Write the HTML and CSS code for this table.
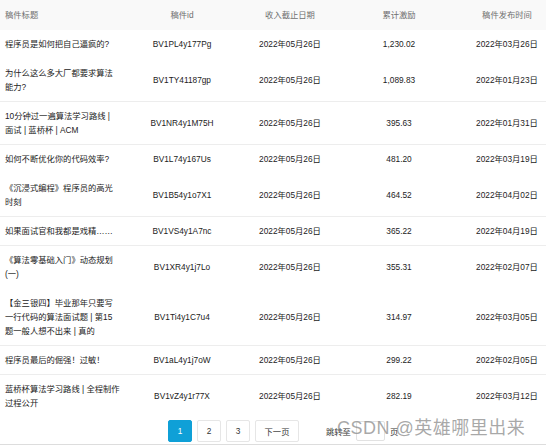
FILE: index.html
```html
<!DOCTYPE html>
<html lang="zh-CN">
<head>
<meta charset="utf-8">
<title>稿件收入</title>
<link rel="stylesheet" href="styles.css">
</head>
<body>
<div class="page">
  <div class="table-wrap">
    <table class="data-table">
      <colgroup>
        <col class="c-title">
        <col class="c-id">
        <col class="c-date">
        <col class="c-num">
        <col class="c-pub">
      </colgroup>
      <thead>
        <tr>
          <th class="left">稿件标题</th>
          <th>稿件id</th>
          <th>收入截止日期</th>
          <th>累计激励</th>
          <th>稿件发布时间</th>
        </tr>
      </thead>
      <tbody>
        <tr class="faint">
          <td class="left">程序员是如何把自己逼疯的?</td>
          <td>BV1PL4y177Pg</td>
          <td>2022年05月26日</td>
          <td>1,230.02</td>
          <td>2022年03月26日</td>
        </tr>
        <tr>
          <td class="left">为什么这么多大厂都要求算法能力?</td>
          <td>BV1TY41187gp</td>
          <td>2022年05月26日</td>
          <td>1,089.83</td>
          <td>2022年01月23日</td>
        </tr>
        <tr>
          <td class="left">10分钟过一遍算法学习路线 | 面试 | 蓝桥杯 | ACM</td>
          <td>BV1NR4y1M75H</td>
          <td>2022年05月26日</td>
          <td>395.63</td>
          <td>2022年01月31日</td>
        </tr>
        <tr class="faint">
          <td class="left">如何不断优化你的代码效率?</td>
          <td>BV1L74y167Us</td>
          <td>2022年05月26日</td>
          <td>481.20</td>
          <td>2022年03月19日</td>
        </tr>
        <tr>
          <td class="left">《沉浸式编程》程序员的高光时刻</td>
          <td>BV1B54y1o7X1</td>
          <td>2022年05月26日</td>
          <td>464.52</td>
          <td>2022年04月02日</td>
        </tr>
        <tr>
          <td class="left">如果面试官和我都是戏精……</td>
          <td>BV1VS4y1A7nc</td>
          <td>2022年05月26日</td>
          <td>365.22</td>
          <td>2022年04月19日</td>
        </tr>
        <tr class="faint">
          <td class="left">《算法零基础入门》动态规划(一)</td>
          <td>BV1XR4y1j7Lo</td>
          <td>2022年05月26日</td>
          <td>355.31</td>
          <td>2022年02月07日</td>
        </tr>
        <tr>
          <td class="left">【金三银四】毕业那年只要写一行代码的算法面试题 | 第15<wbr>题一般人想不出来 | 真的</td>
          <td>BV1Ti4y1C7u4</td>
          <td>2022年05月26日</td>
          <td>314.97</td>
          <td>2022年03月05日</td>
        </tr>
        <tr>
          <td class="left">程序员最后的倔强！过敏！</td>
          <td>BV1aL4y1j7oW</td>
          <td>2022年05月26日</td>
          <td>299.22</td>
          <td>2022年02月05日</td>
        </tr>
        <tr class="faint">
          <td class="left">蓝桥杯算法学习路线 | 全程制作过程公开</td>
          <td>BV1vZ4y1r77X</td>
          <td>2022年05月26日</td>
          <td>282.19</td>
          <td>2022年03月12日</td>
        </tr>
      </tbody>
    </table>
  </div>
  <div class="pager">
    <span class="pg-btn active">1</span>
    <span class="pg-btn">2</span>
    <span class="pg-btn">3</span>
    <span class="pg-btn next">下一页</span>
    <span class="jump">跳转至</span>
    <span class="jump-input"></span>
    <span class="jump-unit">页</span>
  </div>
  <div class="bottom-rule"></div>
  <div class="watermark">CSDN @英雄哪里出来</div>
</div>
</body>
</html>
```
FILE: styles.css
```css
html, body {
  margin: 0;
  padding: 0;
  background: #ffffff;
  overflow: hidden;
}
body {
  font-family: "Liberation Sans", "Noto Sans CJK SC", sans-serif;
  font-size: 8.3px;
  color: #222222;
}
.page {
  position: relative;
  width: 546px;
  height: 447px;
}
.table-wrap {
  width: 546px;
  overflow: hidden;
}
.data-table {
  width: 557px;
  table-layout: fixed;
  border-collapse: collapse;
}
.c-title { width: 125px; }
.c-id { width: 114px; }
.c-date { width: 102px; }
.c-num { width: 116px; }
.c-pub { width: 100px; }

.data-table th,
.data-table td {
  padding: 7px 5px;
  line-height: 14px;
  text-align: center;
  vertical-align: middle;
  border-bottom: 1px solid #ededed;
  word-break: normal;
}
.data-table th {
  background: #f9f9f9;
  color: #6f6f6f;
  font-weight: normal;
  padding-top: 8px;
  border-bottom-color: #f9f9f9;
}
.data-table .left {
  text-align: left;
}
.data-table tr.faint td {
  border-bottom-color: #ffffff;
}

.pager {
  display: flex;
  align-items: center;
  height: 22px;
  margin-top: 2px;
  padding-left: 168px;
  gap: 5px;
}
.pg-btn {
  box-sizing: border-box;
  height: 22px;
  min-width: 24px;
  padding: 0 4px;
  border: 1px solid #e6e6e6;
  border-radius: 2px;
  display: flex;
  align-items: center;
  justify-content: center;
  color: #333333;
  background: #ffffff;
}
.pg-btn.active {
  background: #0fa0d7;
  border-color: #0fa0d7;
  color: #ffffff;
}
.pg-btn.next {
  width: 44px;
}
.jump {
  margin-left: 22px;
  color: #333333;
}
.jump-input {
  box-sizing: border-box;
  width: 29px;
  height: 20px;
  border: 1px solid #e2e2e2;
  border-radius: 2px;
}
.jump-unit {
  color: #333333;
}
.bottom-rule {
  height: 2px;
  border-bottom: 1px solid #dddddd;
}
.watermark {
  position: absolute;
  left: 337px;
  top: 416px;
  font-family: "Liberation Sans", "Noto Sans CJK SC", sans-serif;
  font-size: 18px;
  line-height: 24px;
  letter-spacing: 0.5px;
  color: rgba(140, 140, 140, 0.75);
  white-space: nowrap;
}
```
